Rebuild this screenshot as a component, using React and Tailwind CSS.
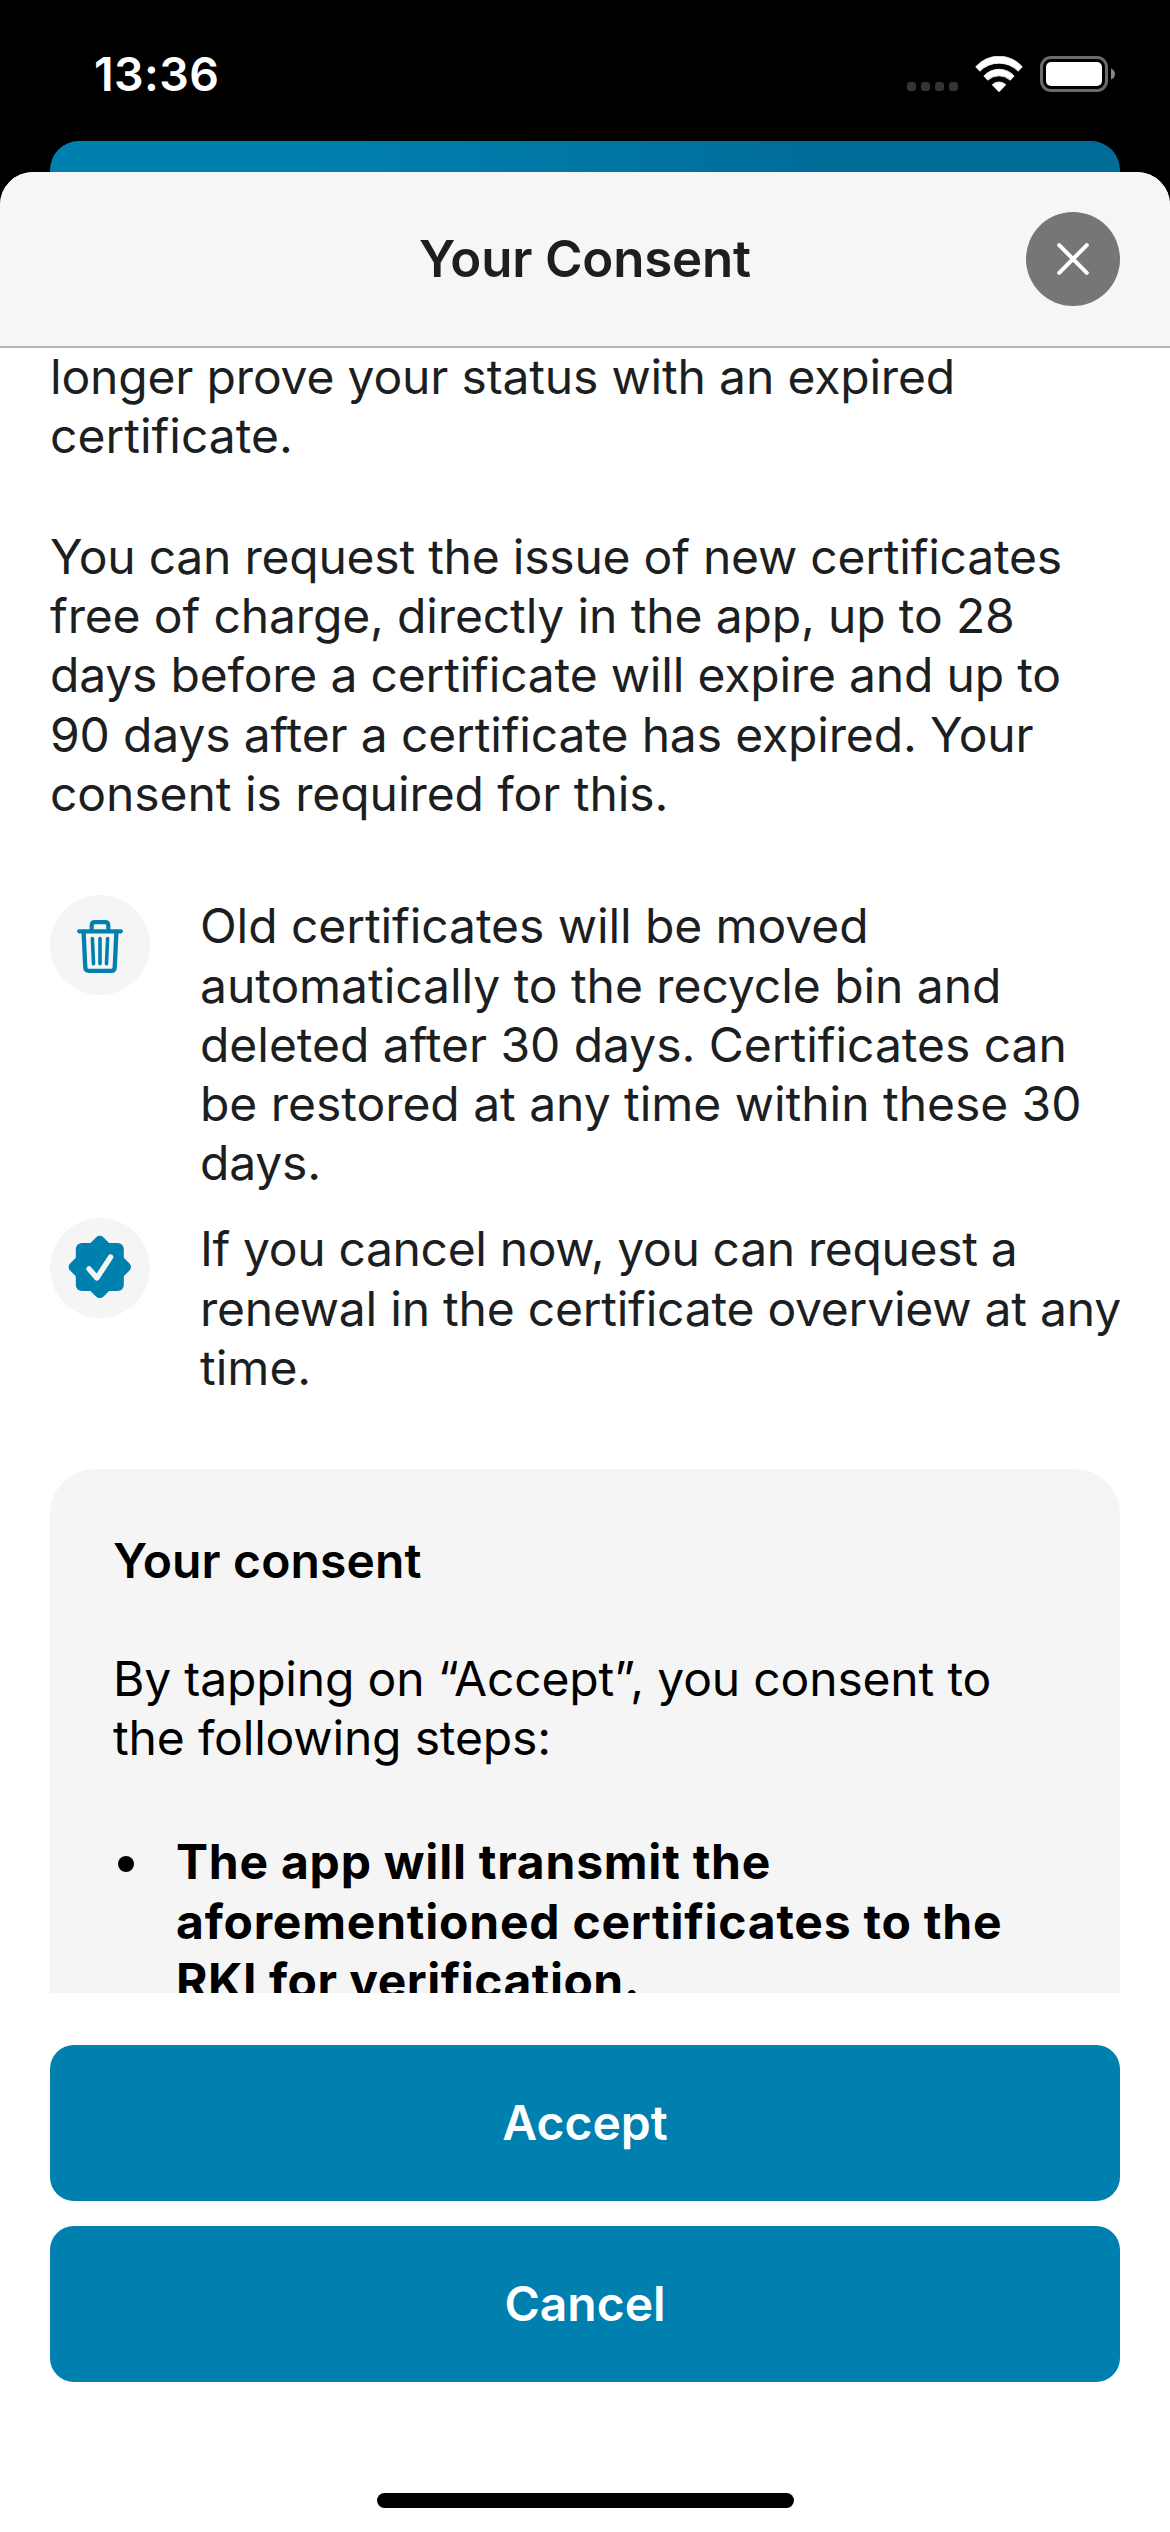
function Line({ spacing = "tracking-normal", children }) {
  return <span className={"block whitespace-nowrap " + spacing}>{children}</span>;
}

function WifiIcon() {
  return (
    <svg width="48" height="37" viewBox="0 0 48 37" fill="#fff" stroke="#fff" strokeWidth="0.8" strokeLinejoin="round">
      <path d="M0.7 10.8 A30.8 30.8 0 0 1 47.3 10.8 L43.2 15.2 A27 27 0 0 0 4.8 15.2 Z" />
      <path d="M8.8 20 A20.5 20.5 0 0 1 39.2 20 L35.2 24.2 A16.5 16.5 0 0 0 12.8 24.2 Z" />
      <path d="M17.2 28.7 A9.8 9.8 0 0 1 30.8 28.7 L24 35.8 Z" />
    </svg>
  );
}

function BatteryIcon() {
  return (
    <svg width="75" height="36" viewBox="0 0 75 36">
      <rect x="1.5" y="1.5" width="65" height="33" rx="9.5" fill="none" stroke="#6b6b6b" strokeWidth="3" />
      <rect x="6" y="6" width="56" height="24" rx="5" fill="#fff" />
      <path d="M71 12.5 Q75 14 75 18 Q75 22 71 23.5 Z" fill="#868686" />
    </svg>
  );
}

function TrashIcon() {
  return (
    <svg width="100" height="100" viewBox="0 0 100 100" fill="none" stroke="#0080ae" strokeLinecap="round" strokeLinejoin="round">
      <path d="M29.2 36.3 H70.8" strokeWidth="4.2" />
      <path d="M41.7 35.5 V30.5 Q41.7 27.2 45 27.2 H55 Q58.3 27.2 58.3 30.5 V35.5" strokeWidth="4.2" />
      <path d="M33.6 37 L35.3 72.5 Q35.5 75.8 38.8 75.8 H61.2 Q64.5 75.8 64.7 72.5 L66.4 37" strokeWidth="4.3" />
      <path d="M42.4 43.5 L43.5 68.8 M50 43.5 V68.8 M57.6 43.5 L56.5 68.8" strokeWidth="3.6" />
    </svg>
  );
}

function VerifiedIcon() {
  return (
    <svg width="100" height="100" viewBox="0 0 100 100">
      <g fill="#0080ae">
        <rect x="25.8" y="25" width="48" height="48" rx="6" />
        <rect x="26.3" y="25.5" width="47" height="47" rx="5" transform="rotate(45 49.8 49)" />
      </g>
      <path d="M39.1 50.9 L46.9 60 L60.6 39" fill="none" stroke="#f5f5f5" strokeWidth="5.4" strokeLinecap="round" strokeLinejoin="round" />
    </svg>
  );
}

function InfoRow({ icon, children }) {
  return (
    <div className="flex items-start gap-[50px]">
      <div className="size-[100px] shrink-0 rounded-full bg-[#f5f5f5]">{icon}</div>
      <p className="pt-[1.5px]">{children}</p>
    </div>
  );
}

function ActionButton({ children }) {
  return (
    <button className="flex h-[156px] w-full items-center justify-center rounded-[24px] bg-[#0080ae] text-[48px] font-semibold text-white">
      {children}
    </button>
  );
}

export default function App() {
  return (
    <div className="flex h-[2532px] w-[1170px] flex-col overflow-hidden bg-black font-[Inter,sans-serif] antialiased">
      <div className="flex h-[141px] shrink-0 items-center justify-between pt-[7px] pr-[55px] pl-[94px]">
        <div className="mt-[2px] text-[46.5px] font-semibold tracking-[0.4px] text-white">13:36</div>
        <div className="flex items-center">
          <div className="mt-[25px] mr-[17px] flex gap-[5px]">
            <i className="size-[9px] rounded-[3px] bg-[#333535]" />
            <i className="size-[9px] rounded-[3px] bg-[#333535]" />
            <i className="size-[9px] rounded-[3px] bg-[#333535]" />
            <i className="size-[9px] rounded-[3px] bg-[#333535]" />
          </div>
          <div className="mr-[17px]"><WifiIcon /></div>
          <BatteryIcon />
        </div>
      </div>
      <div className="mx-[50px] h-[31px] shrink-0 rounded-t-[29px] bg-linear-to-r from-[#0080b0] from-25% to-[#006c98] to-75%" />

      <div className="flex flex-1 flex-col overflow-hidden rounded-t-[33px] bg-white">
        <header className="grid h-[176px] shrink-0 grid-cols-[94px_1fr_94px] items-center border-b-2 border-[#b4b4b4] bg-[#f6f6f6] px-[50px]">
          <span />
          <h1 className="text-center text-[51px] font-semibold tracking-[-0.18px] text-[#1c1e1f]">Your Consent</h1>
          <button className="flex size-[94px] items-center justify-center rounded-full bg-[#757678]">
            <svg width="34" height="34" viewBox="0 0 34 34" stroke="#fff" strokeWidth="4" strokeLinecap="round">
              <path d="M3.2 3.2 L30.8 30.8 M30.8 3.2 L3.2 30.8" />
            </svg>
          </button>
        </header>

        <main className="h-[1645px] shrink-0 overflow-hidden px-[50px] text-[48px] leading-[59.2px] text-[#1c1e1f]">
          <p className="-mt-px">
            <Line spacing="tracking-[-0.17px]">longer prove your status with an expired</Line>
            <Line>certificate.</Line>
          </p>
          <p className="mt-[61.5px]">
            <Line spacing="tracking-[-0.23px]">You can request the issue of new certificates</Line>
            <Line spacing="tracking-[-0.14px]">free of charge, directly in the app, up to 28</Line>
            <Line spacing="tracking-[-0.19px]">days before a certificate will expire and up to</Line>
            <Line spacing="tracking-[-0.15px]">90 days after a certificate has expired. Your</Line>
            <Line spacing="tracking-[-0.07px]">consent is required for this.</Line>
          </p>

          <div className="mt-[72px] flex flex-col gap-[25.5px]">
            <InfoRow icon={<TrashIcon />}>
              <Line spacing="tracking-[-0.08px]">Old certificates will be moved</Line>
              <Line spacing="tracking-[-0.06px]">automatically to the recycle bin and</Line>
              <Line spacing="tracking-[-0.04px]">deleted after 30 days. Certificates can</Line>
              <Line spacing="tracking-[-0.04px]">be restored at any time within these 30</Line>
              <Line spacing="tracking-[-0.2px]">days.</Line>
            </InfoRow>
            <InfoRow icon={<VerifiedIcon />}>
              <Line spacing="tracking-[-0.35px]">If you cancel now, you can request a</Line>
              <Line spacing="tracking-[-0.23px]">renewal in the certificate overview at any</Line>
              <Line>time.</Line>
            </InfoRow>
          </div>

          <section className="mt-[72px] h-[600px] rounded-t-[45px] bg-[#f5f5f5] pt-[62px] pl-[63px] text-black">
            <h2 className="font-semibold tracking-[0.15px]">Your consent</h2>
            <p className="mt-[58.8px]">
              <Line spacing="tracking-[-0.17px]">By tapping on “Accept”, you consent to</Line>
              <Line spacing="tracking-[-0.17px]">the following steps:</Line>
            </p>
            <ul className="mt-[65px]">
              <li className="flex items-start font-bold">
                <i className="mt-[24px] mr-[42px] ml-[5px] size-[16px] rounded-full bg-black" />
                <div>
                  <Line spacing="tracking-[0.77px]">The app will transmit the</Line>
                  <Line spacing="tracking-[0.78px]">aforementioned certificates to the</Line>
                  <Line spacing="tracking-[0.5px]">RKI for verification.</Line>
                </div>
              </li>
            </ul>
          </section>
        </main>

        <footer className="flex flex-1 flex-col items-center gap-[25px] bg-white px-[50px] pt-[52px]">
          <ActionButton>Accept</ActionButton>
          <ActionButton>Cancel</ActionButton>
          <div className="mt-[86px] h-[15px] w-[417px] rounded-full bg-black" />
        </footer>
      </div>
    </div>
  );
}
